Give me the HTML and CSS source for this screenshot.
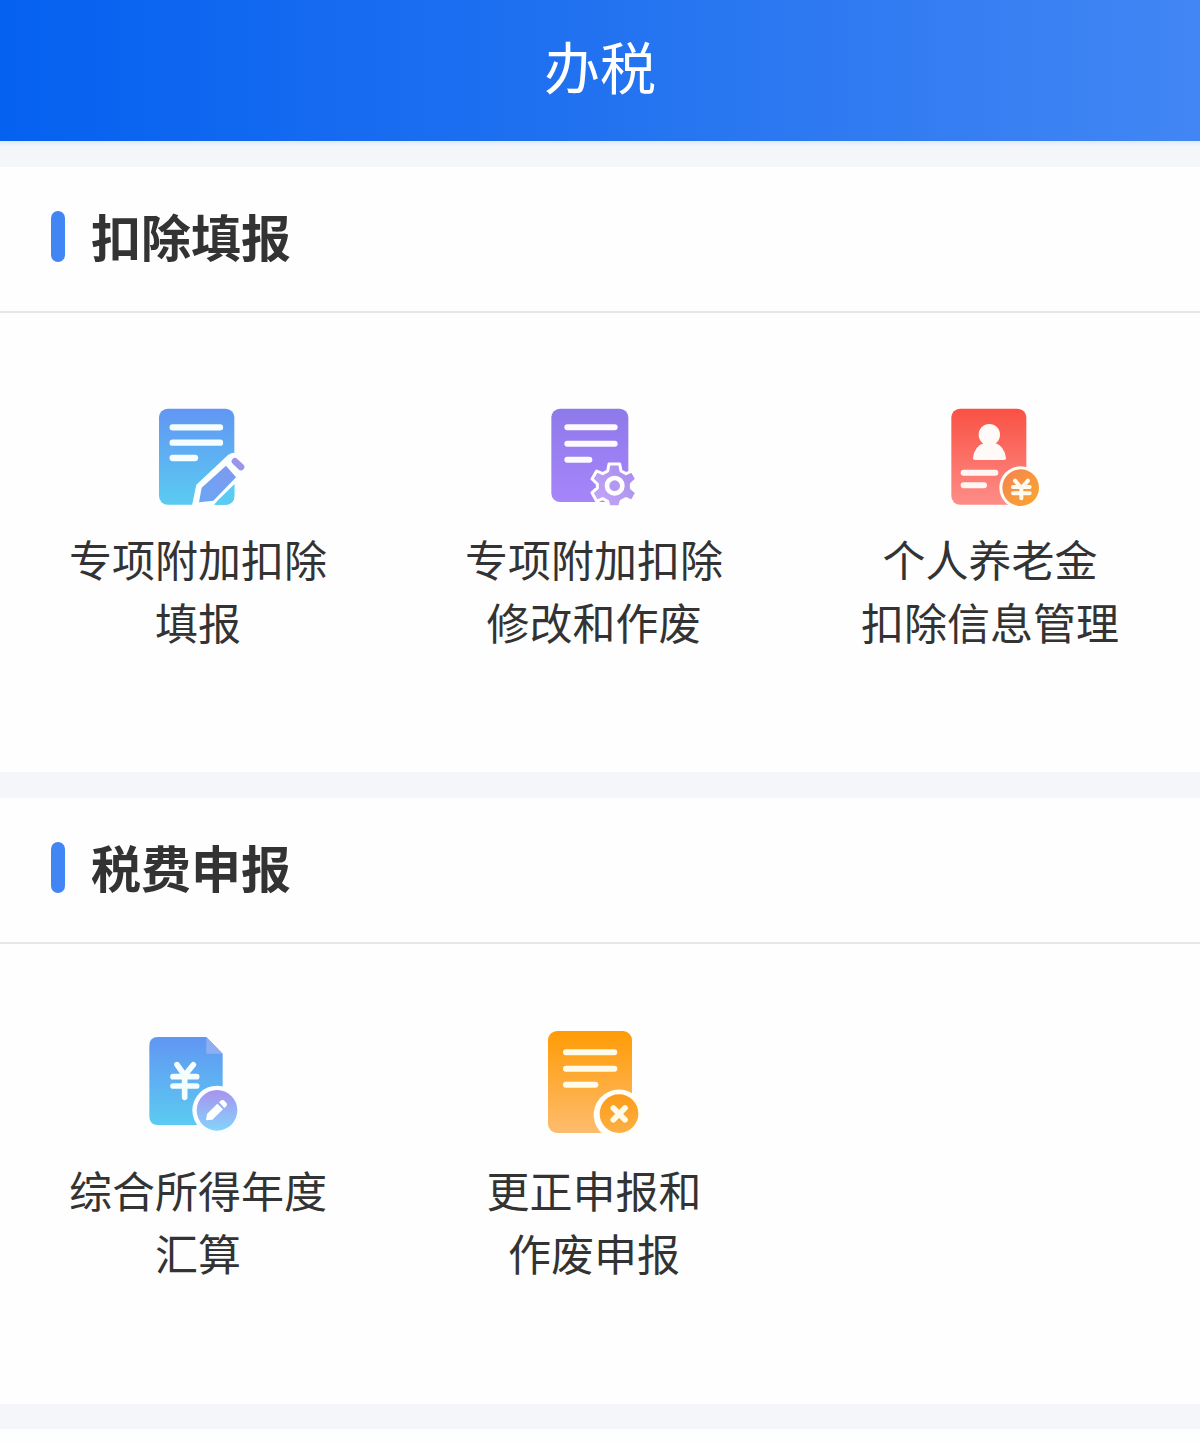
FILE: index.html
```html
<!DOCTYPE html>
<html lang="zh-CN">
<head>
  <meta charset="UTF-8" />
  <meta name="viewport" content="width=device-width, initial-scale=1.0"/>
  <title>办税</title>
  <link rel="stylesheet" href="styles.css">
</head>
<body>

<header class="header">
  <h1>办税</h1>
</header>

<main>
  <!-- Deductions -->
  <section class="section">
    <div class="section-title">
      <h2>扣除填报</h2>
    </div>
    <div class="grid">
      <a class="item">
        <svg class="icon" viewBox="-4 0 360 360">
          <defs>
            <linearGradient id="blueDoc" x1="0" y1="0" x2="0" y2="1">
              <stop offset="0" stop-color="#6196f3"/>
              <stop offset="1" stop-color="#5bcbf1"/>
            </linearGradient>
            <linearGradient id="pencil" x1="1" y1="0" x2="0" y2="1">
              <stop offset="0" stop-color="#7f98f0"/>
              <stop offset="1" stop-color="#6aa6f4"/>
            </linearGradient>
          </defs>
          <rect x="59" y="41" width="226" height="288" rx="26" fill="url(#blueDoc)"/>
          <path d="M100 97H242M100 143H242M100 189H167" stroke="#f4feff" stroke-width="19" stroke-linecap="round"/>
          <path d="M157 336L171 269L266 180Q286 167 302 180L325 204Q334 216 321 228L240 320L218 336Z" fill="#fbffff"/>
          <path d="M179 322L187 278L260 212L290 247L222 317Z" fill="url(#pencil)"/>
          <path d="M236 316L285 268V303Q285 329 259 329H224Z" fill="#5bcbf1"/>
          <path d="M287 199L305 216" stroke="#9c94e8" stroke-width="20" stroke-linecap="round"/>
        </svg>
        <span>专项附加扣除<br>填报</span>
      </a>
      <a class="item">
        <svg class="icon" viewBox="-1 0 360 360">
          <defs>
            <linearGradient id="purpleDoc" x1="0" y1="0" x2="0" y2="1">
              <stop offset="0" stop-color="#8e7aea"/>
              <stop offset="1" stop-color="#a785fb"/>
            </linearGradient>
            <linearGradient id="gear" x1="1" y1="0" x2="0" y2="1">
              <stop offset="0" stop-color="#a58bea"/>
              <stop offset="1" stop-color="#c5a9fb"/>
            </linearGradient>
          </defs>
          <rect x="51" y="41" width="231" height="280" rx="26" fill="url(#purpleDoc)"/>
          <path d="M99 97H241M99 146H241M99 194H165" stroke="#fdfaff" stroke-width="18" stroke-linecap="round"/>
          <path d="M224 207H256L260 228L275 236L293 228L307 252L291 267V279L307 293L293 319L275 311L260 319L256 335H224L220 319L205 311L187 319L173 293L189 279V267L173 252L187 228L205 236L220 228Z" fill="url(#gear)" stroke="#fff" stroke-width="9" stroke-linejoin="round"/>
          <circle cx="241" cy="272" r="23" fill="#b397f1" stroke="#fff" stroke-width="14"/>
        </svg>
        <span>专项附加扣除<br>修改和作废</span>
      </a>
      <a class="item">
        <svg class="icon" viewBox="-13 0 360 360">
          <defs>
            <linearGradient id="redDoc" x1="0" y1="0" x2="0" y2="1">
              <stop offset="0" stop-color="#fa5144"/>
              <stop offset="1" stop-color="#fd8d87"/>
            </linearGradient>
            <linearGradient id="coin" x1="0" y1="0" x2="1" y2="1">
              <stop offset="0" stop-color="#f48250"/>
              <stop offset="1" stop-color="#f9a831"/>
            </linearGradient>
          </defs>
          <rect x="51" y="41" width="225" height="288" rx="26" fill="url(#redDoc)"/>
          <circle cx="165" cy="119" r="32" fill="#fffaf8"/>
          <path d="M116 190Q119 153 151 143H181Q211 153 215 190Q215 195 209 195H122Q116 195 116 190Z" fill="#fffaf8"/>
          <path d="M88 233H183M88 271H149" stroke="#fff6f4" stroke-width="18" stroke-linecap="round"/>
          <circle cx="259" cy="278" r="64" fill="#fffdfa"/>
          <circle cx="259" cy="278" r="55" fill="url(#coin)"/>
          <path d="M242 257L261 279L281 257M261 279V310M236 276H286M236 295H286" fill="none" stroke="#fffaf0" stroke-width="12" stroke-linecap="round"/>
        </svg>
        <span>个人养老金<br>扣除信息管理</span>
      </a>
    </div>
  </section>

  <!-- Tax returns -->
  <section class="section">
    <div class="section-title">
      <h2>税费申报</h2>
    </div>
    <div class="grid">
      <a class="item">
        <svg class="icon" viewBox="11 18 360 360">
          <defs>
            <linearGradient id="badge" x1="0" y1="0" x2="0" y2="1">
              <stop offset="0" stop-color="#aa91ee"/>
              <stop offset="1" stop-color="#82d5fb"/>
            </linearGradient>
          </defs>
          <path d="M71 51H216L265 101V289Q265 315 239 315H71Q45 315 45 289V77Q45 51 71 51Z" fill="url(#blueDoc)"/>
          <path d="M216 51L265 101H216Z" fill="#8daff2"/>
          <path d="M128 134L151 166L177 134M151 166V232M116 170H187M116 198H187" fill="none" stroke="#f4feff" stroke-width="17" stroke-linecap="round" stroke-linejoin="round"/>
          <circle cx="248" cy="271" r="74" fill="#fafeff"/>
          <circle cx="248" cy="271" r="61" fill="url(#badge)"/>
          <path d="M215 301L218 282L249 251L266 268L234 299Z" fill="#fff"/>
          <path d="M254 247L261 241Q267 238 271 243L277 250Q280 255 276 259L270 264Z" fill="#fff"/>
        </svg>
        <span>综合所得年度<br>汇算</span>
      </a>
      <a class="item">
        <svg class="icon" viewBox="-1 18 360 360">
          <defs>
            <linearGradient id="orangeDoc" x1="0" y1="0" x2="0" y2="1">
              <stop offset="0" stop-color="#ff9b06"/>
              <stop offset="1" stop-color="#fdbc6d"/>
            </linearGradient>
            <linearGradient id="cancel" x1="0" y1="0" x2="0" y2="1">
              <stop offset="0" stop-color="#fd9b18"/>
              <stop offset="1" stop-color="#fbb044"/>
            </linearGradient>
          </defs>
          <rect x="41" y="33" width="252" height="306" rx="27" fill="url(#orangeDoc)"/>
          <path d="M95 97H240M95 146H240M95 194H183" stroke="#fffbe9" stroke-width="18" stroke-linecap="round"/>
          <path d="M208 345A76 76 0 1 1 300 345Z" fill="#fffef8"/>
          <circle cx="254" cy="281" r="58" fill="url(#cancel)"/>
          <path d="M237 264L272 299M272 264L237 299" stroke="#fffbea" stroke-width="17" stroke-linecap="round"/>
        </svg>
        <span>更正申报和<br>作废申报</span>
      </a>
    </div>
  </section>
</main>

</body>
</html>
```
FILE: styles.css
```css
:root {
  --page-bg: #f5f6fa;
  --text: #333;
  --accent: #4285f4;
  --line: #e6e6e6;
}
* {
  box-sizing: border-box;
}
body {
  margin: 0;
  background: #fdfefe;
  color: var(--text);
  font-family: "Noto Sans CJK SC", sans-serif;
}
h1, h2 {
  margin: 0;
}
.header {
  display: flex;
  align-items: center;
  justify-content: center;
  height: 141px;
  padding-bottom: 12px;
  background: linear-gradient(to right, #0561f0, #2272f0 50%, #4286f4);
}
.header h1 {
  color: #fff;
  font-size: 56px;
  font-weight: 400;
  line-height: 80px;
}
main {
  display: flex;
  flex-direction: column;
  gap: 26px;
  padding: 26px 0 25px;
  background: linear-gradient(#dfeafb, var(--page-bg) 6px);
}
.section {
  height: 605px;
  background: #fefefe;
}
.section + .section {
  height: 606px;
}
.section-title {
  display: flex;
  align-items: center;
  gap: 26px;
  height: 146px;
  padding: 0 51px 5px;
  border-bottom: 2px solid var(--line);
}
.section-title::before {
  content: "";
  width: 14px;
  height: 51px;
  border-radius: 7px;
  background: var(--accent);
}
.section-title h2 {
  padding-bottom: 4px;
  font-size: 50px;
  font-weight: 700;
  line-height: 72px;
}
.grid {
  display: grid;
  grid-template-columns: repeat(3, 1fr);
  padding: 82px 12px 0 0;
}
.item {
  display: flex;
  flex-direction: column;
  align-items: center;
  gap: 12px;
  font-size: 43px;
  line-height: 63px;
  text-align: center;
}
.icon {
  width: 120px;
  height: 120px;
}
```
